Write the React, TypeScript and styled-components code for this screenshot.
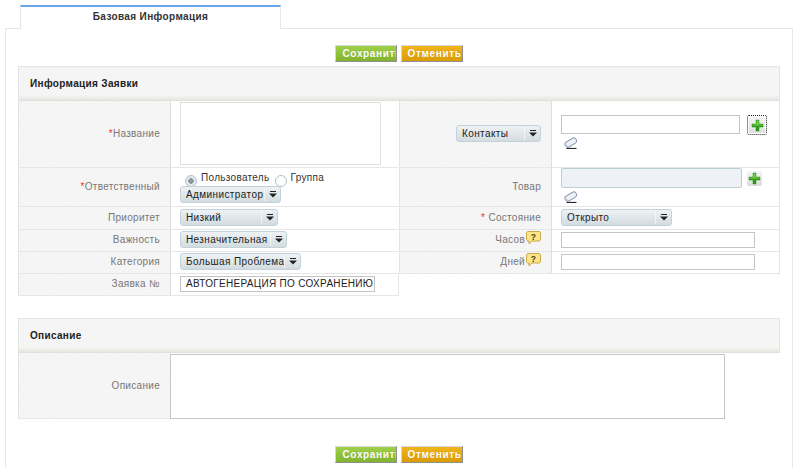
import React from "react";
import styled, { createGlobalStyle } from "styled-components";

const GlobalStyle = createGlobalStyle`
html, body {
  margin: 0;
  padding: 0;
  background: #fff;
}
* {
  box-sizing: border-box;
}
`;

const Page = styled.div`
  width: 800px;
  height: 468px;
  overflow: hidden;
  padding: 5px 7px 0 5px;
  font-family: "Liberation Sans", Arial, sans-serif;
  font-size: 10px;
  letter-spacing: 0.3px;
  color: #222;
`;

const Tabs = styled.div`
  display: flex;
  padding-left: 15px;
  height: 24px;
  position: relative;
  z-index: 1;
`;

const Tab = styled.div`
  width: 261px;
  height: 24px;
  background: #fff;
  border: 1px solid #e6e6e6;
  border-top: 2px solid #6aa6e8;
  border-bottom: none;
  padding-top: 2px;
  text-align: center;
  font-weight: bold;
  letter-spacing: 0.37px;
  line-height: 16px;
  color: #333;
`;

const Panel = styled.div`
  margin-top: -1px;
  height: 460px;
  border: 1px solid #e8e8e8;
  border-bottom: none;
  padding: 16px 12px 0 12px;
`;

const Buttons = styled.div<{ $top?: number }>`
  display: flex;
  justify-content: center;
  gap: 4px;
  padding-right: 1px;
  margin-top: ${(p) => p.$top ?? 0}px;
`;

const Button = styled.button<{ $kind: "save" | "cancel" }>`
  width: 62px;
  height: 17px;
  padding: 0 0 0 ${(p) => (p.$kind === "save" ? 7 : 6)}px;
  text-align: left;
  overflow: hidden;
  white-space: nowrap;
  font-family: inherit;
  font-size: 10px;
  font-weight: bold;
  letter-spacing: 0.65px;
  color: #fff;
  text-shadow: 0 0 1px rgba(0, 0, 0, 0.15);
  border: 1px solid;
  border-color: #d8d8d8 #8f8f8f #8f8f8f #d8d8d8;
  background: ${(p) =>
    p.$kind === "save"
      ? "linear-gradient(#9fd04a, #82b32c)"
      : "linear-gradient(#f0b41c, #d99c06)"};
`;

const SectionHead = styled.div<{ $top: number }>`
  margin-top: ${(p) => p.$top}px;
  height: 35px;
  background: linear-gradient(#f5f5f5 0 28px, #e3e3dd 34px);
  border: 1px solid #e4e4e4;
  border-bottom: 1px solid #e0e0e0;
  padding-left: 11px;
  line-height: 33px;
  font-weight: bold;
  letter-spacing: 0.33px;
  color: #222;
`;

const InfoGrid = styled.div`
  display: grid;
  grid-template-columns: 153px 228px 153px 228px;
  grid-template-rows: 67px 39px 23px 22px 22px 22px;
  width: 762px;
`;

const Label = styled.div`
  display: flex;
  align-items: center;
  justify-content: flex-end;
  gap: 1px;
  padding: 0 10px 2px 0;
  color: #777;
  border-bottom: 1px solid #e6e6e6;
  border-left: 1px solid #e4e4e4;
  border-right: 1px solid #dedede;
  background: repeating-linear-gradient(135deg, #f6f6f6 0 2px, #f4f4f4 2px 4px);
`;

const Req = styled.span`
  color: #e33;
`;

const Field = styled.div<{ $last?: boolean }>`
  padding: 0 0 2px 9px;
  display: flex;
  align-items: center;
  border-bottom: 1px solid #e6e6e6;
  border-right: 1px solid ${(p) => (p.$last ? "#e6e6e6" : "transparent")};
`;

const StackField = styled(Field)`
  flex-direction: column;
  align-items: flex-start;
  justify-content: flex-start;
`;

const Area = styled.div`
  width: 201px;
  height: 64px;
  margin-top: 1px;
  border: 1px solid #e0e0e0;
  background: #fff;
`;

const RadioRow = styled.div`
  display: flex;
  align-items: flex-start;
  height: 18px;
  padding: 4px 0 0 5px;
  color: #333;
`;

const RadioDot = styled.span<{ $on?: boolean }>`
  width: 12px;
  height: 12px;
  margin: 3px 4px 0 0;
  border-radius: 50%;
  border: 1px solid #b5c0c5;
  background: ${(p) =>
    p.$on ? "radial-gradient(circle, #8a97a0 0 2.5px, #e6eaec 3px)" : "#fff"};
`;

const RadioText = styled.span`
  margin-right: 5px;
  line-height: 12px;
`;

const Select = styled.div<{ $w: number }>`
  width: ${(p) => p.$w}px;
  height: 17px;
  display: flex;
  align-items: center;
  flex: none;
  padding-left: 5px;
  border: 1px solid #c2d2da;
  border-radius: 3px;
  background: linear-gradient(#eef2f4, #d3dcdf);
  color: #222;
  letter-spacing: 0.4px;
  white-space: nowrap;
`;

const SelectText = styled.span`
  flex: 1;
  overflow: hidden;
`;

const SelectArrow = styled.span`
  width: 16px;
  height: 13px;
  flex: none;
  display: flex;
  align-items: center;
  justify-content: center;
  border-left: 1px solid #f2f5f6;
`;

const Input = styled.div<{ $w: number; $h?: number; $blue?: boolean }>`
  width: ${(p) => p.$w}px;
  height: ${(p) => p.$h ?? 16}px;
  flex: none;
  border: 1px solid ${(p) => (p.$blue ? "#bccdd6" : "#c4c4c4")};
  border-radius: ${(p) => (p.$blue ? "2px" : "0")};
  background: ${(p) => (p.$blue ? "#eef2f7" : "#fff")};
`;

const AutoInput = styled(Input)`
  padding-left: 5px;
  line-height: 14px;
  color: #222;
  letter-spacing: 0.3px;
  white-space: nowrap;
  overflow: hidden;
`;

const PickRow = styled.div<{ $gap: number; $top: number }>`
  display: flex;
  align-items: flex-start;
  gap: ${(p) => p.$gap}px;
  margin-top: ${(p) => p.$top}px;
`;

const PlusBox = styled.span<{ $focus?: boolean }>`
  display: flex;
  align-items: center;
  justify-content: center;
  flex: none;
  width: ${(p) => (p.$focus ? 20 : 15)}px;
  height: ${(p) => (p.$focus ? 20 : 15)}px;
  margin-top: ${(p) => (p.$focus ? 0 : 3)}px;
  padding: ${(p) => (p.$focus ? "2px" : "0")};
  background: linear-gradient(#f4f4f4, #dcdcdc);
  background-clip: content-box;
  border-radius: 2px;
  outline: ${(p) => (p.$focus ? "1px dotted #222" : "none")};
  outline-offset: -1px;
`;

const Eraser = styled.span<{ $top: number }>`
  display: block;
  height: 12px;
  margin: ${(p) => p.$top}px 0 0 2px;
`;

const Hint = styled.span`
  display: flex;
  margin-top: -3px;
`;

const DescRow = styled.div`
  display: flex;
  height: 66px;
`;

const DescLabel = styled(Label)`
  width: 153px;
  padding-bottom: 0;
`;

const DescArea = styled.div`
  width: 555px;
  height: 65px;
  margin: 1px 0 0 -1px;
  border: 1px solid #c6c6c6;
  background: #fff;
`;

const ArrowIcon = () => (
  <svg width="8" height="7" viewBox="0 0 8 7">
    <rect x="1" y="0" width="6" height="1" fill="#222" />
    <path d="M0 2.5h8L4 6.5z" fill="#222" />
  </svg>
);

const PlusIcon = () => (
  <svg width="13" height="13" viewBox="0 0 13 13">
    <path d="M5 1h3v4h4v3H8v4H5V8H1V5h4z" fill="#2ea012" stroke="#1d7a08" strokeWidth="0.4" />
    <path d="M5.4 1.4h2.2v4h4v1H1.4v-1h4z" fill="#6fd24e" />
  </svg>
);

const EraserIcon = () => (
  <svg width="15" height="12" viewBox="0 0 15 12">
    <rect x="1.500" y="2.800" width="12.500" height="5.600" rx="2.600" transform="rotate(-32 7.700 5.600)" fill="#eef1f6" stroke="#7d8aa8" strokeWidth="0.9" />
    <path d="M2.300 6.800 5.600 9.600 3.900 10.200 1.600 8.600z" fill="#b9c6e2" />
    <path d="M3.500 11.400h10" stroke="#111" strokeWidth="1" />
  </svg>
);

const HintIcon = () => (
  <svg width="15" height="14" viewBox="0 0 15 14">
    <path d="M2 .5h11c.8 0 1.500.7 1.500 1.500v6.500c0 .8-.7 1.500-1.500 1.500H6L3 13v-3H2C1.200 10 .5 9.300.5 8.500V2C.5 1.200 1.200.5 2 .5z" fill="#fbe48a" stroke="#c9a94a" />
    <text x="7.500" y="8.500" textAnchor="middle" fontFamily="Liberation Sans" fontWeight="bold" fontSize="8.500" fill="#4a3a10">?</text>
  </svg>
);

const Drop = ({ w, text }: { w: number; text: string }) => (
  <Select $w={w}>
    <SelectText>{text}</SelectText>
    <SelectArrow>
      <ArrowIcon />
    </SelectArrow>
  </Select>
);

const ActionButtons = ({ top }: { top?: number }) => (
  <Buttons $top={top}>
    <Button $kind="save">Сохранить</Button>
    <Button $kind="cancel">Отменить</Button>
  </Buttons>
);

const App = () => {
  return (
    <Page>
      <GlobalStyle />
      <Tabs>
        <Tab>Базовая Информация</Tab>
      </Tabs>
      <Panel>
        <ActionButtons />
        <SectionHead $top={4}>Информация Заявки</SectionHead>
        <InfoGrid>
          <Label>
            <span><Req>*</Req>Название</span>
          </Label>
          <StackField>
            <Area />
          </StackField>
          <Label>
            <Drop w={85} text="Контакты" />
          </Label>
          <StackField $last>
            <PickRow $gap={7} $top={14}>
              <Input $w={179} $h={19} />
              <PlusBox $focus>
                <PlusIcon />
              </PlusBox>
            </PickRow>
            <Eraser $top={2}>
              <EraserIcon />
            </Eraser>
          </StackField>

          <Label>
            <span><Req>*</Req>Ответственный</span>
          </Label>
          <StackField>
            <RadioRow>
              <RadioDot $on />
              <RadioText>Пользователь</RadioText>
              <RadioDot />
              <RadioText>Группа</RadioText>
            </RadioRow>
            <Drop w={101} text="Администратор" />
          </StackField>
          <Label>Товар</Label>
          <StackField $last>
            <PickRow $gap={5} $top={0}>
              <Input $w={181} $h={20} $blue />
              <PlusBox>
                <PlusIcon />
              </PlusBox>
            </PickRow>
            <Eraser $top={3}>
              <EraserIcon />
            </Eraser>
          </StackField>

          <Label>Приоритет</Label>
          <Field>
            <Drop w={98} text="Низкий" />
          </Field>
          <Label>
            <span><Req>*</Req> Состояние</span>
          </Label>
          <Field $last>
            <Drop w={111} text="Открыто" />
          </Field>

          <Label>Важность</Label>
          <Field>
            <Drop w={107} text="Незначительная" />
          </Field>
          <Label>
            Часов
            <Hint>
              <HintIcon />
            </Hint>
          </Label>
          <Field $last>
            <Input $w={194} />
          </Field>

          <Label>Категория</Label>
          <Field>
            <Drop w={121} text="Большая Проблема" />
          </Field>
          <Label>
            Дней
            <Hint>
              <HintIcon />
            </Hint>
          </Label>
          <Field $last>
            <Input $w={194} />
          </Field>

          <Label>Заявка №</Label>
          <Field $last>
            <AutoInput $w={195}>АВТОГЕНЕРАЦИЯ ПО СОХРАНЕНИЮ</AutoInput>
          </Field>
        </InfoGrid>

        <SectionHead $top={22}>Описание</SectionHead>
        <DescRow>
          <DescLabel>Описание</DescLabel>
          <DescArea />
        </DescRow>
        <ActionButtons top={27} />
      </Panel>
    </Page>
  );
};

export default App;
